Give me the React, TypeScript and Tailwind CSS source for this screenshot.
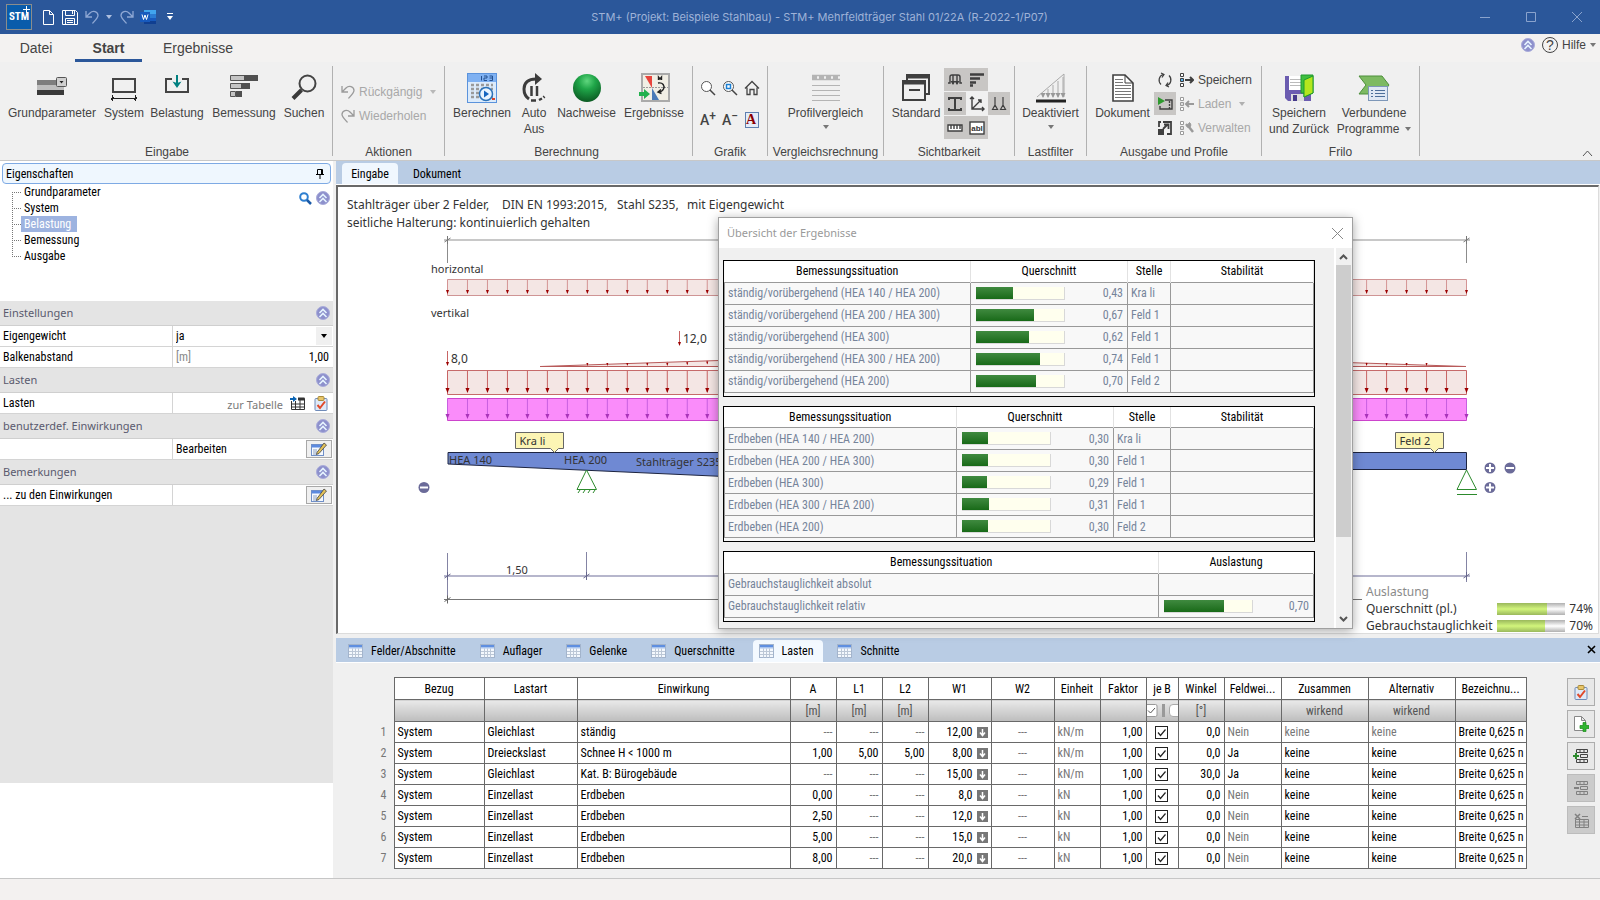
import type { ReactNode } from "react";
import clsx from "clsx";

const seg = "font-['Noto_Sans','Open_Sans',sans-serif]";
const narrow = "font-['Roboto_Condensed','Roboto',sans-serif]";

/* ---------- icons ---------- */

function Caret({ className = "fill-[#777]" }: { className?: string }) {
  return (
    <svg width="6" height="4" viewBox="0 0 6 4" className={className}>
      <path d="M0 0h6L3 4z" />
    </svg>
  );
}

function Undo({ flip = false, light = false }: { flip?: boolean; light?: boolean }) {
  return (
    <svg width="14" height="14" viewBox="0 0 14 14" fill="none" stroke={light ? "#8fa8d4" : "#9a9a9a"} strokeWidth="1.3">
      <g transform={flip ? "matrix(-1 0 0 1 14 0)" : undefined}>
        <path d="M1 1v6h6M1 7L5 3c3-3 8-1.500 8 2.500 0 2-1.500 3.500-5.500 8" />
      </g>
    </svg>
  );
}

function Chevrons() {
  return (
    <svg width="14" height="14" viewBox="0 0 14 14">
      <circle cx="7" cy="7" r="6.500" fill="#8d90cc" stroke="#a9acda" />
      <path d="M3.500 7L7 3.500 10.500 7M3.500 11L7 7.500l3.500 3.500" fill="none" stroke="#e6f4ff" strokeWidth="1.600" />
    </svg>
  );
}

function IconParams() {
  return (
    <svg width="32" height="28" viewBox="0 0 32 28">
      <path d="M1 6h27v5H1z" fill="#7e7e7e" />
      <path d="M1 11h27v5H1z" fill="#bebebe" />
      <path d="M1 16h27v5H1z" fill="#3a3a3a" />
      <rect x="20.500" y="3.500" width="10" height="9" rx="1" fill="#d0d0d0" stroke="#555" />
      <path d="M23.500 7h4l-2 2.500z" fill="#222" />
    </svg>
  );
}

function IconSystem() {
  return (
    <svg width="28" height="28" viewBox="0 0 28 28" fill="none">
      <rect x="3" y="5" width="22" height="13" stroke="#444" strokeWidth="2" />
      <path d="M1 24.500h26M2.500 21v6M25.500 21v6M1 26l3-3M24 26l3-3" stroke="#222" />
    </svg>
  );
}

function IconLoad() {
  return (
    <svg width="28" height="28" viewBox="0 0 28 28" fill="none">
      <path d="M9 5H3v13h22V5h-6" stroke="#444" strokeWidth="2" />
      <path d="M14 1v8" stroke="#008080" strokeWidth="2" />
      <path d="M9.500 7.500L14 14l4.500-6.500L14 9z" fill="#008080" />
    </svg>
  );
}

function IconDesign() {
  return (
    <svg width="30" height="28" viewBox="0 0 30 28">
      <path d="M1.500 1.500h16v5h-16zM1.500 9.500h11v5h-11zM1.500 17.500h5v5h-5z" fill="#c4c4c4" stroke="#555" />
      <path d="M15 1h14v6H15zM12 9h9v6h-9zM7 17h6v6H7z" fill="#505050" />
    </svg>
  );
}

function IconSearch() {
  return (
    <svg width="28" height="28" viewBox="0 0 28 28" fill="none">
      <circle cx="17.500" cy="9.500" r="8" stroke="#444" strokeWidth="2" />
      <path d="M11.500 16L3 24.500" stroke="#3a3a3a" strokeWidth="4" />
    </svg>
  );
}

function IconCalc() {
  return (
    <svg width="30" height="30" viewBox="0 0 30 30">
      <rect x=".5" y=".5" width="29" height="29" fill="#dcebfb" stroke="#5b93dc" />
      <path d="M1 1h28v8H1z" fill="#7fb1f2" />
      <path d="M14.500 3v4.500M17 3h3v2h-3v2.500h3M22.500 3h3v4.500h-3M22.500 5h3" fill="none" stroke="#24508f" />
      {[12, 16, 20, 24].map((y) => (
        <path key={y} d={`M4 ${y}h3M9 ${y}h3M14 ${y}h3M19 ${y}h3M24 ${y}h2`} stroke="#9a9a9a" strokeWidth="2.500" />
      ))}
      <circle cx="19" cy="21" r="6.500" fill="#e7f3ff" stroke="#2c72b8" strokeWidth="1.500" />
      <path d="M17 17.500v7l5-3.500z" fill="#1565c0" />
      <path d="M25 25h3v2h-3z" fill="#d9442c" />
    </svg>
  );
}

function IconAuto() {
  return (
    <svg width="26" height="30" viewBox="0 0 26 30" fill="none">
      <path d="M15 6C7 6 3 10 3 16c0 5 2 8 5 10" stroke="#3c3c3c" strokeWidth="3" />
      <path d="M14 0l7 6-7 6z" fill="#3c3c3c" />
      <path d="M10.500 13v10M16 13v10" stroke="#3c3c3c" strokeWidth="2.500" />
      <path d="M10 27.500h5M18 27l3-1.500M22.500 24.500l1-1" stroke="#3c3c3c" strokeWidth="2.500" />
    </svg>
  );
}

function IconGreenBall() {
  return (
    <svg width="30" height="30" viewBox="0 0 30 30">
      <defs>
        <radialGradient id="ball" cx=".5" cy=".25" r=".75">
          <stop offset="0" stopColor="#5fd67e" />
          <stop offset=".4" stopColor="#1fa548" />
          <stop offset="1" stopColor="#0b5a22" />
        </radialGradient>
      </defs>
      <circle cx="15" cy="15" r="14" fill="url(#ball)" />
    </svg>
  );
}

function IconResults() {
  return (
    <svg width="32" height="30" viewBox="0 0 32 30">
      <rect x="4" y="1" width="27" height="27" fill="#f1eee4" stroke="#aaa" strokeWidth="2" />
      <path d="M5 14.500h25" stroke="#999" strokeDasharray="2 1" />
      <path d="M7 3h7v12z" fill="#e8443c" />
      <path d="M14 15l7 12h-7z" fill="#4a7ab8" />
      <path d="M20.500 7V4l1.500 2 1.500-2v3M20 10c5-1 7 3 5.500 6-1 2-3 3-5 3M23 16.500l-3 2.500 3.500 1.500" fill="none" stroke="#222" strokeWidth="1.400" />
      <path d="M1 19h5v-3l6 5-6 5v-3H1z" fill="#22b14c" />
    </svg>
  );
}

function IconProfiles() {
  return (
    <svg width="30" height="28" viewBox="0 0 30 28" stroke="#b4b4b4">
      <path d="M1 1.500h28M1 5.500h28" strokeWidth="1.500" />
      <path d="M1 3.500h28" strokeWidth="3" strokeDasharray="5 2" />
      <path d="M1 11.500h28M1 16.500h28M1 21.500h28M1 26.500h28" />
    </svg>
  );
}

function IconStandard() {
  return (
    <svg width="30" height="28" viewBox="0 0 30 28" fill="none" stroke="#3f3f3f" strokeWidth="2">
      <path d="M6 6V1h22v19h-4" />
      <path d="M6 3h22" strokeWidth="3" />
      <rect x="2" y="7" width="22" height="19" />
      <path d="M2 9h22" strokeWidth="3" />
      <path d="M8 16h11" />
    </svg>
  );
}

function IconLoadFilter() {
  return (
    <svg width="32" height="30" viewBox="0 0 32 30" fill="none">
      <path d="M2 24L29 1v23" stroke="#aaa" />
      {[8, 13, 18, 23, 28].map((x, i) => (
        <g key={x}>
          <path d={`M${x} ${20 - i * 4}V24`} stroke="#aaa" />
          <path d={`M${x - 2.5} 20h5L${x} 25z`} fill="#999" />
        </g>
      ))}
      <path d="M1 28h30" stroke="#222" strokeWidth="3" />
    </svg>
  );
}

function IconDocument() {
  return (
    <svg width="22" height="28" viewBox="0 0 22 28" fill="none">
      <path d="M1 1h12l8 8v18H1z" fill="#fff" stroke="#3f3f3f" strokeWidth="1.600" />
      <path d="M13 1v8h8" stroke="#3f3f3f" />
      <path d="M3 5.500h8M3 8.500h8M3 11.500h16M3 14.500h16M3 17.500h16M3 20.500h16M3 23.500h16" stroke="#777" />
    </svg>
  );
}

function IconSaveBack() {
  return (
    <svg width="30" height="28" viewBox="0 0 30 28">
      <path d="M1 2h26v25H4l-3-3z" fill="#6b5cb0" />
      <path d="M5 2h14v14H5z" fill="#fff" />
      <path d="M6 5.500h12M6 8.500h12M6 11.500h12" stroke="#bbb" />
      <path d="M7 20h13v7H7z" fill="#ddd" />
      <path d="M9 21h4v6H9z" fill="#45398a" />
      <path d="M17 1h12v18l-9 4V19h-3z" fill="#3fbf3f" stroke="#1f9a2f" />
      <path d="M20 6l9-4v17l-9 4z" fill="#b4e61e" stroke="#1f9a2f" />
    </svg>
  );
}

function IconLinked() {
  return (
    <svg width="32" height="28" viewBox="0 0 32 28">
      <path d="M1 2h23l7 9-7 9H1l7-9z" fill="#7dba62" stroke="#4c8f3a" />
      <rect x="10.500" y="12.500" width="19" height="14" fill="#dfe8f4" stroke="#7d97b8" />
      <path d="M13 16.500h2M17 16.500h10M13 19.500h2M17 19.500h10M13 22.500h2M17 22.500h10" stroke="#4d6f9a" />
    </svg>
  );
}

function Lens({ inner = false }: { inner?: boolean }) {
  return (
    <svg width="16" height="16" viewBox="0 0 16 16" fill="none">
      <circle cx="6.500" cy="6.500" r="5" stroke="#555" fill="#fff" />
      <path d="M10 10l5 5" stroke="#444" strokeWidth="1.500" />
      {inner && <rect x="4.500" y="4.500" width="4" height="4" stroke="#1a7fd4" strokeWidth="1.500" />}
    </svg>
  );
}

function TableIcon() {
  return (
    <svg width="15" height="14" viewBox="0 0 15 14">
      <rect x=".5" y=".5" width="14" height="13" fill="#f4f8fd" stroke="#a3b4cc" />
      <path d="M1 1h13v2H1z" fill="#5f8fe0" />
      <path d="M1 3h13v1.500H1z" fill="#a9c4ee" />
      <path d="M1 7.500h13M1 10.500h13M4.500 4.500v9M7.500 4.500v9M10.500 4.500v9" stroke="#bcc7d6" />
    </svg>
  );
}

function Clipboard() {
  return (
    <svg width="14" height="15" viewBox="0 0 14 15">
      <rect x="1" y="2.500" width="12" height="12" rx="1" fill="#dfe9f7" stroke="#6f8bb8" />
      <rect x="4" y=".5" width="6" height="4" rx="1" fill="#e8c66a" stroke="#a98a3a" />
      <path d="M3.500 9l2.500 3 5-6.500" fill="none" stroke="#e0492a" strokeWidth="2" />
    </svg>
  );
}

function EditIcon() {
  return (
    <svg width="16" height="14" viewBox="0 0 16 14">
      <rect x=".5" y="2.500" width="12" height="11" fill="#f6f9fd" stroke="#6f8fc8" />
      <path d="M1 3h11v2.500H1z" fill="#5c8ae0" />
      <path d="M2 8h4M2 10h6M2 12h4" stroke="#8fa3c4" />
      <path d="M6 10.500L13 1l2.500 2L8 11.500l-2.500 1z" fill="#e3c25a" stroke="#444" strokeWidth=".8" />
    </svg>
  );
}

/* ---------- ribbon ---------- */

function Big({ icon, label, width, caret = false }: { icon: ReactNode; label: string[]; width: string; caret?: boolean }) {
  return (
    <button className={clsx("flex shrink-0 flex-col items-center pt-2", width)}>
      <span className="flex h-7 items-center justify-center">{icon}</span>
      <span className="mt-[3px] whitespace-nowrap leading-4">
        {label.map((line, i) => (
          <span key={line} className="flex items-center justify-center gap-1.5">
            {line}
            {caret && i > 0 && <Caret />}
          </span>
        ))}
      </span>
      {caret && label.length === 1 && <span className="mt-1"><Caret /></span>}
    </button>
  );
}

function Group({ label, width, children }: { label: string; width: string; children: ReactNode }) {
  return (
    <div className={clsx("flex h-[90px] shrink-0 flex-col justify-between border-r border-[#b1b1b1]", width)}>
      <div className="flex">{children}</div>
      <div className="h-2 whitespace-nowrap text-center leading-2">{label}</div>
    </div>
  );
}

function Cell({ on = false, title, children }: { on?: boolean; title: string; children?: ReactNode }) {
  return (
    <button aria-label={title} className={clsx("flex h-[23px] w-[22px] items-center justify-center", on && "bg-[#c8c6c4]")}>
      <svg width="16" height="16" viewBox="0 0 16 16" fill="none" stroke="#3f3f3f" strokeWidth="1.400">{children}</svg>
    </button>
  );
}

function ProfileRow({ label, off = false, caret = false, children }: { label: string; off?: boolean; caret?: boolean; children: ReactNode }) {
  return (
    <button className={clsx("flex h-6 items-center gap-1", off && "text-[#a8a8a8]")}>
      <svg width="14" height="16" viewBox="0 0 14 16" fill="none" stroke={off ? "#9a9a9a" : "#3f3f3f"}>
        <path d="M.5 1.500h3v3h-3zM.5 11.500h3v3h-3z" fill="#fff" />
        <path d="M.5 6.500h3v3h-3z" fill={off ? "#ddd" : "#59b4f0"} />
        {children}
      </svg>
      {label}
      {caret && <span className="ml-1"><Caret className="fill-[#b0b0b0]" /></span>}
    </button>
  );
}

function Ribbon() {
  return (
    <div className="flex h-[99px] items-start border-b border-[#c8c8c8] pt-1 text-xs text-[#444]">
      <Group label="Eingabe" width="w-[333px] pl-[2px]">
        <Big icon={<IconParams />} label={["Grundparameter"]} width="w-[100px]" />
        <Big icon={<IconSystem />} label={["System"]} width="w-11" />
        <Big icon={<IconLoad />} label={["Belastung"]} width="w-[62px]" />
        <Big icon={<IconDesign />} label={["Bemessung"]} width="w-[72px]" />
        <Big icon={<IconSearch />} label={["Suchen"]} width="w-12" />
      </Group>
      <Group label="Aktionen" width="w-[112px]">
        <div className="flex flex-col pl-2 pt-[14px] text-[#a8a8a8]">
          <button className="flex h-6 items-center gap-1"><Undo /> Rückgängig <span className="ml-1"><Caret className="fill-[#b8b8b8]" /></span></button>
          <button className="flex h-6 items-center gap-1"><Undo flip /> Wiederholen</button>
        </div>
      </Group>
      <Group label="Berechnung" width="w-[248px] pl-1 pr-2">
        <Big icon={<IconCalc />} label={["Berechnen"]} width="w-[66px]" />
        <Big icon={<IconAuto />} label={["Auto", "Aus"]} width="w-[38px]" />
        <Big icon={<IconGreenBall />} label={["Nachweise"]} width="w-[67px]" />
        <Big icon={<IconResults />} label={["Ergebnisse"]} width="w-[68px]" />
      </Group>
      <Group label="Grafik" width="w-[75px]">
        <div className="grid grid-cols-3 items-center justify-items-center gap-x-[6px] pl-[7px] pt-[14px] text-[15px] leading-4">
          <button aria-label="Zoom"><Lens /></button>
          <button aria-label="Zoom Fenster"><Lens inner /></button>
          <button aria-label="Gesamtansicht">
            <svg width="16" height="16" viewBox="0 0 16 16" fill="none" stroke="#444" strokeWidth="1.300">
              <path d="M1 8.500L8 1.500l7 7M3 7.500v7h3v-5h4v5h3v-7" />
            </svg>
          </button>
          <button className="mt-4 flex font-['Roboto',sans-serif] text-sm font-medium leading-4">A<span className="text-xs leading-2">+</span></button>
          <button className="mt-4 flex font-['Roboto',sans-serif] text-sm font-medium leading-4">A<span className="text-xs leading-2">−</span></button>
          <button aria-label="Schrift" className="mt-4">
            <span className="flex h-4 w-[14px] items-center border border-[#5f7fb0] bg-[#e4ecf8] font-['Liberation_Serif',serif] text-sm font-bold text-[#8b0000]">A</span>
          </button>
        </div>
      </Group>
      <Group label="Vergleichsrechnung" width="w-[116px]">
        <Big icon={<IconProfiles />} label={["Profilvergleich"]} width="w-[115px]" caret />
      </Group>
      <Group label="Sichtbarkeit" width="w-[131px]">
        <Big icon={<IconStandard />} label={["Standard"]} width="w-[60px] pl-1" />
        <div className="flex flex-col gap-px pt-[2px]">
          <div className="flex">
            <Cell on title="Lasten"><path d="M1 11h2V5q0-2 2-2h6q2 0 2 2v6h2M6 3v9M10 3v9" /><path d="M3.500 9h5L6 13zM7.500 9h5L10 13z" fill="#3f3f3f" stroke="none" /></Cell>
            <Cell on title="Balken"><path d="M1 2.500h14M1 6.500h10M1 10.500h6M1 13.500h3" strokeWidth="2.600" /></Cell>
          </div>
          <div className="flex">
            <Cell on title="Profil"><path d="M1 2h14M1 14h14M8 2v12M2 2v2M14 2v2M2 14v-2M14 14v-2" strokeWidth="2" /></Cell>
            <Cell title="Achsen"><path d="M3 1v12h12M1 3l2-2 2 2M13 11l2 2-2 2M3 13L12 4M9 4h3v3" /></Cell>
            <Cell on title="Lager"><path d="M4 1v8M12 1v8M1.500 13.500L4 9l2.500 4.500zM9.500 13.500L12 9l2.500 4.500z" strokeWidth="1.200" /></Cell>
          </div>
          <div className="flex">
            <Cell on title="Maße"><path d="M1 5h14v6H1z" fill="#fff" /><path d="M4 5v4M7 5v4M10 5v4M13 5v4" /></Cell>
            <Cell on title="Texte">
              <rect x="1" y="2" width="14" height="12" fill="#fff" />
              <text x="8" y="11" textAnchor="middle" stroke="none" fill="#333" className="text-[8px] font-bold">abl</text>
            </Cell>
          </div>
        </div>
      </Group>
      <Group label="Lastfilter" width="w-[72px]">
        <Big icon={<IconLoadFilter />} label={["Deaktiviert"]} width="w-[71px]" caret />
      </Group>
      <Group label="Ausgabe und Profile" width="w-[175px]">
        <Big icon={<IconDocument />} label={["Dokument"]} width="w-[67px] pl-1" />
        <div className="flex flex-col gap-px pt-[2px]">
          <Cell title="Aktualisieren"><path d="M6 2.500a6 6 0 0 0-2 10M10 13.500a6 6 0 0 0 2-10M4 1l3 1.500-2 3M12 15l-3-1.500 2-3" strokeWidth="1.200" /></Cell>
          <Cell on title="Vorschau"><path d="M1 1v8l7-4z" fill="#2e9a2e" stroke="none" /><path d="M8 4h7v9H3v-3" /><path d="M12.500 5v8" strokeDasharray="2 1" /></Cell>
          <Cell title="Vollbild"><path d="M6 2h8v12h-4M2 7V2h2M6 9l5-5M7 4.500h4.500V9" strokeWidth="1.800" /><path d="M1 9h6v6H1z" fill="#3f3f3f" stroke="none" /></Cell>
        </div>
        <div className="flex flex-col pl-1 pt-[2px]">
          <ProfileRow label="Speichern"><path d="M5 8h8M10 5l3 3-3 3" strokeWidth="2" /></ProfileRow>
          <ProfileRow label="Laden" off caret><path d="M14 8H6M9 5L6 8l3 3" strokeWidth="2" /></ProfileRow>
          <ProfileRow label="Verwalten" off><path d="M9 7l4 5" strokeWidth="2.500" /><path d="M9.500 2.500L8 4.500 6 4a3 3 0 0 0 3.500 3.500A3 3 0 0 0 9.500 2.500z" fill="#9a9a9a" /></ProfileRow>
        </div>
      </Group>
      <Group label="Frilo" width="w-[158px]">
        <Big icon={<IconSaveBack />} label={["Speichern", "und Zurück"]} width="w-[74px]" />
        <Big icon={<IconLinked />} label={["Verbundene", "Programme"]} width="w-[76px]" caret />
      </Group>
      <button aria-label="Menüband reduzieren" className="ml-auto mr-[7px] self-end pb-[3px]">
        <svg width="11" height="7" viewBox="0 0 11 7" fill="none" stroke="#555"><path d="M1 6l4.500-5L10 6" /></svg>
      </button>
    </div>
  );
}

function TitleBar() {
  return (
    <header className="flex h-[34px] items-center bg-[#2b579a] pl-[6px]">
      <span className="relative flex h-[26px] w-[26px] items-center justify-center border border-[#8b8d8c] bg-[#0a5cab] font-['Roboto_Condensed',sans-serif] text-[11px] font-bold text-white">
        STM
        <svg width="7" height="7" viewBox="0 0 7 7" stroke="#fff" className="absolute right-px top-px"><path d="M3.500 0v7M0 3.500h7" /></svg>
      </span>
      <button aria-label="Neu" className="ml-[11px]">
        <svg width="11" height="15" viewBox="0 0 11 15" fill="none" stroke="#fff"><path d="M.5.5h6l4 4v10H.5zM6.500.5v4h4" /></svg>
      </button>
      <button aria-label="Speichern" className="ml-2">
        <svg width="16" height="15" viewBox="0 0 16 15" fill="none" stroke="#fff">
          <path d="M.5.5h13l2 2v12H.5zM3.500.5v5h9v-5M3.500 14.500v-6h9v6M5 10.500h6M5 12.500h6M10.500 1v3" />
        </svg>
      </button>
      <button aria-label="Rückgängig" className="ml-[7px]"><Undo light /></button>
      <span className="ml-[7px]"><Caret className="fill-[#aebfdf]" /></span>
      <button aria-label="Wiederholen" className="ml-2"><Undo flip light /></button>
      <button aria-label="Word" className="ml-[6px]">
        <svg width="16" height="16" viewBox="0 0 16 16">
          <path d="M4 1h12v4H4z" fill="#41a5ee" /><path d="M4 5h12v4H4z" fill="#2b7cd3" /><path d="M4 9h12v3H4z" fill="#185abd" /><path d="M4 12h12v3H4z" fill="#103f91" />
          <rect y="3" width="10" height="10" fill="#185abd" />
          <path d="M2 5.500l1.500 5L5 6l1.500 4.500L8 5.500" fill="none" stroke="#fff" />
        </svg>
      </button>
      <svg width="6" height="8" viewBox="0 0 6 8" fill="#fff" className="ml-[11px]"><path d="M0 0h6v1H0zM0 3h6L3 7z" /></svg>
      <h1 className="flex-1 pr-3.5 text-center font-['Inter',sans-serif] text-[11px] text-[#9fb3d8]">
        STM+ (Projekt: Beispiele Stahlbau) - STM+ Mehrfeldträger Stahl 01/22A (R-2022-1/P07)
      </h1>
      <div className="flex items-center gap-9 pr-[18px]">
        {["M0 5.500h10", "M.5.5h9v9h-9z", "M0 0l10 10M10 0L0 10"].map((d, i) => (
          <button key={d} aria-label={["Minimieren", "Maximieren", "Schließen"][i]}>
            <svg width="10" height="10" viewBox="0 0 10 10" fill="none" stroke="#8aa3cd"><path d={d} /></svg>
          </button>
        ))}
      </div>
    </header>
  );
}

function RibbonTabs() {
  return (
    <nav className="flex h-7 items-center bg-[#f3f2f1] text-sm text-[#444]">
      <button className="h-7 w-[72px]">Datei</button>
      <button className="ml-[3px] h-7 w-[67px] border-b-3 border-[#2b579a] pt-[3px] font-bold">Start</button>
      <button className="ml-[11px] h-7 w-[90px]">Ergebnisse</button>
      <div className="ml-auto flex items-center gap-1 pb-1.5 pr-1 text-xs">
        <Chevrons />
        <button className="ml-[3px] flex items-center gap-1">
          <span className="flex h-4 w-4 items-center justify-center rounded-full border border-[#444] text-sm leading-4">?</span>
          Hilfe
          <Caret />
        </button>
      </div>
    </nav>
  );
}

/* ---------- left panel ---------- */

const treeItems = ["Grundparameter", "System", "Belastung", "Bemessung", "Ausgabe"];

function SectionHead({ label }: { label: string }) {
  return (
    <div className={clsx("flex h-[25px] items-center justify-between border-b border-[#cfcfcf] bg-[#e4e4e4] pl-[3px] pr-[3px] text-[11px] text-[#5a5a6e]", seg)}>
      {label}
      <button aria-label={label}><Chevrons /></button>
    </div>
  );
}

function PropRow({ label, children }: { label: string; children?: ReactNode }) {
  return (
    <div className="flex h-[21px] border-b border-[#d4d4d4] bg-white">
      <div className="flex w-[173px] shrink-0 items-center border-r border-[#d4d4d4] pl-[3px]">{label}</div>
      <div className="flex flex-1 items-center pl-[3px]">{children}</div>
    </div>
  );
}

function EditButton() {
  return (
    <button aria-label="Bearbeiten" className="ml-auto mr-px flex h-[18px] w-[26px] items-center justify-center border border-[#a8a8a8] bg-[#f0f0f0]">
      <EditIcon />
    </button>
  );
}

function LeftPanel() {
  return (
    <aside className={clsx("flex w-[333px] shrink-0 flex-col bg-white text-xs text-black", narrow)}>
      <div className="mx-[2px] mt-[2px] flex h-[21px] shrink-0 items-center justify-between rounded-sm border border-[#7eaae4] bg-[#eff7fe] pl-[3px] pr-[6px]">
        Eigenschaften
        <svg width="8" height="10" viewBox="0 0 8 10" fill="none" stroke="#000"><path d="M1.500 5.500v-5h5v5M0 5.500h8M4 6v4M5.500 0v5" /></svg>
      </div>
      <div className="flex h-[117px] shrink-0 justify-between">
        <ul className="ml-3">
          {treeItems.map((item, i) => (
            <li key={item} className="flex h-4 items-center">
              <svg width="9" height="16" viewBox="0 0 9 16" stroke="#777" strokeDasharray="1 1">
                <path d={i === 0 ? "M.5 8v8M0 8.500h9" : i === 4 ? "M.5 0v9M0 8.500h9" : "M.5 0v16M0 8.500h9"} />
              </svg>
              <a href="#" className={clsx("h-4 pl-[3px] leading-4", i === 2 && "bg-[#9db3e0] pr-1.5 text-white")}>{item}</a>
            </li>
          ))}
        </ul>
        <div className="flex h-7 items-center gap-1 pr-[3px]">
          <svg width="13" height="13" viewBox="0 0 13 13" fill="none"><circle cx="5" cy="5" r="3.800" stroke="#2f7fd0" strokeWidth="2" /><path d="M8 8l4 4" stroke="#1a5aa8" strokeWidth="2.500" /></svg>
          <button aria-label="Einklappen"><Chevrons /></button>
        </div>
      </div>
      <SectionHead label="Einstellungen" />
      <PropRow label="Eigengewicht">
        <select aria-label="Eigengewicht" className="h-[19px] flex-1 appearance-none outline-none"><option>ja</option></select>
        <span className="mr-px flex h-[18px] w-4 items-center justify-center bg-[#f0f0f0]"><Caret className="fill-black" /></span>
      </PropRow>
      <PropRow label="Balkenabstand">
        <span className="text-[#8a8a8a]">[m]</span>
        <input aria-label="Balkenabstand" defaultValue="1,00" className="w-0 flex-1 pr-1 text-right outline-none" />
      </PropRow>
      <SectionHead label="Lasten" />
      <PropRow label="Lasten">
        <a href="#" className={clsx("ml-auto pt-1 text-[11px] text-[#7a7a7a]", seg)}>zur Tabelle</a>
        <svg width="15" height="14" viewBox="0 0 15 14" className="ml-[7px]" fill="none">
          <path d="M1.500 5v8.500h13v-11H8M1.500 8h13M1.500 11h13M5.500 5v8.500M10 3v10.500" stroke="#333" />
          <path d="M8 1.500h6.500v3H8z" fill="#333" /><path d="M0 2h3V0l4 3-4 3V4H0z" fill="#0a64b4" />
        </svg>
        <button aria-label="Lasten prüfen" className="ml-[9px] mr-[5px]"><Clipboard /></button>
      </PropRow>
      <SectionHead label="benutzerdef. Einwirkungen" />
      <PropRow label="">Bearbeiten<EditButton /></PropRow>
      <SectionHead label="Bemerkungen" />
      <PropRow label="... zu den Einwirkungen"><EditButton /></PropRow>
      <div className="flex-1 bg-[#e4e4e4]" />
      <div className="h-[95px] shrink-0" />
    </aside>
  );
}

/* ---------- drawing ---------- */

const X0 = 447.5;
const X1 = 1466.5;
const stations = Array.from({ length: 52 }, (_, i) => X0 + (i * (X1 - X0)) / 51);

function Arrow({ x, y1, y2, line = "#c86464", head = "#9c0000", size = 2 }: { x: number; y1: number; y2: number; line?: string; head?: string; size?: number }) {
  return (
    <g>
      <path d={`M${x} ${y1}V${y2}`} stroke={line} />
      <path d={`M${x - size} ${y2 - size * 2}h${size * 2}L${x} ${y2 + 1}z`} fill={head} />
    </g>
  );
}

function Tick({ x, y, color }: { x: number; y: number; color: string }) {
  return <path d={`M${x - 3} ${y + 2}l6-4M${x} ${y - 4}v8`} stroke={color} fill="none" />;
}

function Tag({ x, label }: { x: number; label: string }) {
  return (
    <g>
      <path d={`M${x} 432.500h48v16h-5l-4 4-4-4h-35z`} fill="#fcf5b4" stroke="#666" />
      <text x={x + 4} y="445">{label}</text>
    </g>
  );
}

function Node({ x, y, plus = false }: { x: number; y: number; plus?: boolean }) {
  return (
    <g>
      <circle cx={x} cy={y} r="5.500" fill="#6b6b99" />
      <path d={`M${x - 4} ${y}h8${plus ? `M${x} ${y - 4}v8` : ""}`} stroke="#fff" strokeWidth="2" />
    </g>
  );
}

function Drawing() {
  return (
    <svg className={clsx("h-full w-full text-[11px]", seg)} fill="#333">
      <g transform="translate(-338 -187)">
        <g className="text-xs">
          <text x="347" y="209">
            <tspan>Stahlträger über 2 Felder,</tspan>
            <tspan x="502">DIN EN 1993:2015,</tspan>
            <tspan x="617">Stahl S235,</tspan>
            <tspan x="687">mit Eigengewicht</tspan>
          </text>
          <text x="347" y="227">seitliche Halterung: kontinuierlich gehalten</text>
        </g>
        <path d="M444 240H1470" stroke="#c8c8c8" strokeWidth="2" />
        <path d="M447.500 236v27M1466.500 236v27" stroke="#8c8c8c" />
        <Tick x={447.5} y={240} color="#777" />
        <Tick x={1466.5} y={240} color="#777" />

        <text x="431" y="273">horizontal</text>
        <path d={`M${X0} 279.500H${X1}v16H${X0}z`} fill="#f4e6e4" stroke="#cf9494" />
        {stations.map((x) => <Arrow key={x} x={x} y1={280} y2={293} line="#d49494" size={1.5} />)}

        <text x="431" y="317">vertikal</text>
        <Arrow x={679.5} y1={331} y2={345} size={1.5} />
        <text x="683" y="343" className="text-xs">12,0</text>
        <Arrow x={447.5} y1={351} y2={365} size={1.5} />
        <text x="451" y="363" className="text-xs">8,0</text>
        <path d="M540 366.500L1003 351l463 15.500z" fill="#f4e6e4" stroke="#b85a5a" />
        {stations.slice(7, 50).map((x) => {
          const top = 366 - (15 * (x < 1003 ? x - 540 : 1467 - x)) / 463;
          return <Arrow key={x} x={x} y1={top} y2={Math.min(top + 3, 365)} size={1} />;
        })}

        <path d={`M${X0} 370.500H${X1}v24H${X0}z`} fill="#f4e6e4" stroke="#c66a6a" />
        {stations.map((x) => <Arrow key={x} x={x} y1={371} y2={392} />)}
        <path d={`M${X0} 398.500H${X1}v22H${X0}z`} fill="#fa8cfa" stroke="#cc44cc" />
        {stations.map((x) => <Arrow key={x} x={x} y1={399} y2={418} line="#c860e0" head="#a834b8" />)}

        <path d="M448 452.500H1466.500v17H1250L1000 489 448 464z" fill="#6f89d3" stroke="#1d2440" />
        <Tag x={515.5} label="Kra li" />
        <Tag x={1395.5} label="Feld 2" />
        <text x="449" y="464">HEA 140</text>
        <text x="564" y="464">HEA 200</text>
        <text x="636" y="466">Stahlträger S235</text>

        <g fill="none" stroke="#2c8a2c">
          <path d="M586.500 470l-9.500 19.500h19.500zM578 493l2-3M583 493l2-3M588 493l2-3M593 493l2-3" />
          <path d="M1466.500 470l-9.500 19.500h19.500zM1457 494.500h20" />
        </g>
        <Node x={424} y={487.5} />
        <Node x={1490} y={468} plus />
        <Node x={1510} y={468} />
        <Node x={1490} y={487.5} plus />

        <path d="M444 576H1470" stroke="#b6b6cc" strokeWidth="2" />
        <path d="M447.500 553v49M586.500 552v28M1466.500 552v30" stroke="#8484a4" />
        <path d="M444 599.500H1362" stroke="#777" />
        {[447.5, 586.5, 1466.5].map((x) => <Tick key={x} x={x} y={576} color="#66668c" />)}
        <Tick x={447.5} y={599.5} color="#666" />
        <text x="506" y="574">1,50</text>
      </g>
    </svg>
  );
}

function Utilisation() {
  const rows: [string, number][] = [["Querschnitt (pl.)", 74], ["Gebrauchstauglichkeit", 70]];
  return (
    <div className={clsx("absolute -bottom-px right-[5px] w-[227px] text-xs leading-[17px] text-[#333]", seg)}>
      <div className="text-[#8a8a8a]">Auslastung</div>
      {rows.map(([label, pct]) => (
        <div key={label} className="flex items-center">
          <span className="flex-1">{label}</span>
          <span className="flex h-3 w-[68px] bg-linear-to-b from-[#b0b0b0] via-white to-[#b0b0b0]">
            <span className="bg-linear-to-b from-[#9ab85c] via-[#d2f57c] to-[#9ab85c]" style={{ width: `${pct}%` }} />
          </span>
          <span className="w-7 text-right">{pct}%</span>
        </div>
      ))}
    </div>
  );
}

/* ---------- results dialog ---------- */

type Result = [string, number | null, string?];

const permanent: Result[] = [
  ["ständig/vorübergehend (HEA 140 / HEA 200)", 0.43, "Kra li"],
  ["ständig/vorübergehend (HEA 200 / HEA 300)", 0.67, "Feld 1"],
  ["ständig/vorübergehend (HEA 300)", 0.62, "Feld 1"],
  ["ständig/vorübergehend (HEA 300 / HEA 200)", 0.74, "Feld 1"],
  ["ständig/vorübergehend (HEA 200)", 0.7, "Feld 2"],
];
const seismic: Result[] = [
  ["Erdbeben (HEA 140 / HEA 200)", 0.3, "Kra li"],
  ["Erdbeben (HEA 200 / HEA 300)", 0.3, "Feld 1"],
  ["Erdbeben (HEA 300)", 0.29, "Feld 1"],
  ["Erdbeben (HEA 300 / HEA 200)", 0.31, "Feld 1"],
  ["Erdbeben (HEA 200)", 0.3, "Feld 2"],
];
const service: Result[] = [
  ["Gebrauchstauglichkeit absolut", null],
  ["Gebrauchstauglichkeit relativ", 0.7],
];

function ResultTable({ heads, cols, rows }: { heads: string[]; cols: string[]; rows: Result[] }) {
  return (
    <div className="mb-[9px] border border-black bg-[#f8f8f8] pb-[3px]">
      <table className="w-full table-fixed border-collapse">
        <colgroup>{cols.map((c, i) => <col key={i} className={c} />)}</colgroup>
        <thead>
          <tr className="h-[21px] border-b border-[#999] bg-white text-black">
            {heads.map((h) => <th key={h} className="border-r border-[#e2e2e2] p-0 font-normal">{h}</th>)}
          </tr>
        </thead>
        <tbody>
          {rows.map(([name, value, place]) => (
            <tr key={name} className="h-[22px] border-b border-[#999] text-[#76849a]">
              <td className="border-x border-[#999] p-0 pl-[3px]">{name}</td>
              <td className="border-r border-[#999] p-0 pl-[5px] pr-1">
                {value !== null && (
                  <div className="flex items-center justify-between">
                    <span className="flex h-[13px] w-[89px] border-b border-r border-[#d8d8d8] bg-[#ffffee]">
                      <span className="bg-linear-to-b from-[#3f8a3f] to-[#176a17]" style={{ width: `${value * 98}%` }} />
                    </span>
                    {value.toFixed(2).replace(".", ",")}
                  </div>
                )}
              </td>
              {heads.length > 2 && <td className="border-r border-[#999] p-0 pl-[3px]">{place}</td>}
              {heads.length > 2 && <td className="border-r border-[#999] p-0" />}
            </tr>
          ))}
        </tbody>
      </table>
    </div>
  );
}

function ResultsDialog() {
  const heads = ["Bemessungssituation", "Querschnitt", "Stelle", "Stabilität"];
  return (
    <div role="dialog" aria-label="Übersicht der Ergebnisse" className="absolute left-[380px] top-[30px] flex h-[412px] w-[635px] flex-col border border-[#a0a0a0] bg-[#f0f0f0] shadow-[0_2px_10px_rgba(0,0,0,0.35)]">
      <div className={clsx("flex h-[30px] shrink-0 items-center justify-between bg-white pl-2 pr-[9px] text-[11px] text-[#999]", seg)}>
        Übersicht der Ergebnisse
        <button aria-label="Schließen">
          <svg width="11" height="11" viewBox="0 0 11 11" stroke="#888"><path d="M0 0l11 11M11 0L0 11" /></svg>
        </button>
      </div>
      <div className="flex min-h-0 flex-1">
        <div className={clsx("min-w-0 flex-1 overflow-hidden pl-1 pt-3 text-xs", narrow)}>
          <ResultTable heads={heads} cols={["w-[246px]", "w-[157px]", "w-[43px]", ""]} rows={permanent} />
          <ResultTable heads={heads} cols={["w-[232px]", "w-[157px]", "w-[57px]", ""]} rows={seismic} />
          <ResultTable heads={["Bemessungssituation", "Auslastung"]} cols={["w-[434px]", ""]} rows={service} />
        </div>
        <div className="ml-[19px] mr-px flex w-[17px] flex-col items-center border-l-2 border-white">
          <svg width="9" height="17" viewBox="0 0 9 17" fill="none" stroke="#555" strokeWidth="2"><path d="M1 11l3.500-3.500L8 11" /></svg>
          <div className="h-[272px] w-full bg-[#cdcdcd]" />
          <svg width="9" height="17" viewBox="0 0 9 17" fill="none" stroke="#555" strokeWidth="2" className="mt-auto"><path d="M1 6l3.500 3.500L8 6" /></svg>
        </div>
      </div>
    </div>
  );
}

/* ---------- load table ---------- */

const columns: { head: string; unit?: string; width: string }[] = [
  { head: "Bezug", width: "w-[90px]" },
  { head: "Lastart", width: "w-[93px]" },
  { head: "Einwirkung", width: "w-[213px]" },
  { head: "A", unit: "[m]", width: "w-[46px]" },
  { head: "L1", unit: "[m]", width: "w-[46px]" },
  { head: "L2", unit: "[m]", width: "w-[46px]" },
  { head: "W1", width: "w-[63px]" },
  { head: "W2", width: "w-[63px]" },
  { head: "Einheit", width: "w-[46px]" },
  { head: "Faktor", width: "w-[46px]" },
  { head: "je B", unit: "check", width: "w-8" },
  { head: "Winkel", unit: "[°]", width: "w-[46px]" },
  { head: "Feldwei...", width: "w-[57px]" },
  { head: "Zusammen", unit: "wirkend", width: "w-[87px]" },
  { head: "Alternativ", unit: "wirkend", width: "w-[87px]" },
  { head: "Bezeichnu...", width: "w-[71px]" },
];

const loads = [
  { art: "Gleichlast", ew: "ständig", a: "---", l1: "---", l2: "---", w: "12,00", unit: "kN/m", angle: "0,0", field: "Nein" },
  { art: "Dreieckslast", ew: "Schnee H < 1000 m", a: "1,00", l1: "5,00", l2: "5,00", w: "8,00", unit: "kN/m", angle: "0,0", field: "Ja" },
  { art: "Gleichlast", ew: "Kat. B: Bürogebäude", a: "---", l1: "---", l2: "---", w: "15,00", unit: "kN/m", angle: "30,0", field: "Ja" },
  { art: "Einzellast", ew: "Erdbeben", a: "0,00", l1: "---", l2: "---", w: "8,0", unit: "kN", angle: "0,0", field: "Nein" },
  { art: "Einzellast", ew: "Erdbeben", a: "2,50", l1: "---", l2: "---", w: "12,0", unit: "kN", angle: "0,0", field: "Nein" },
  { art: "Einzellast", ew: "Erdbeben", a: "5,00", l1: "---", l2: "---", w: "15,0", unit: "kN", angle: "0,0", field: "Nein" },
  { art: "Einzellast", ew: "Erdbeben", a: "8,00", l1: "---", l2: "---", w: "20,0", unit: "kN", angle: "0,0", field: "Nein" },
];

function Td({ right = false, center = false, dim = false, children }: { right?: boolean; center?: boolean; dim?: boolean; children: ReactNode }) {
  return (
    <td className={clsx("overflow-hidden border border-[#696969] bg-white p-0 px-[3px]", right && "text-right", center && "text-center", dim && "text-[#777]")}>
      {children}
    </td>
  );
}

function NumTd({ value }: { value: string }) {
  return <Td right dim={value === "---"}>{value}</Td>;
}

function LoadTable() {
  return (
    <table className="ml-7 w-[1162px] shrink-0 table-fixed border-collapse whitespace-nowrap">
      <colgroup>
        <col className="w-[30px]" />
        {columns.map((c) => <col key={c.head} className={c.width} />)}
      </colgroup>
      <thead>
        <tr className="h-[22px]">
          <td />
          {columns.map((c) => <th key={c.head} className="border border-[#696969] bg-white p-0 font-normal">{c.head}</th>)}
        </tr>
        <tr className="h-[22px]">
          <td />
          {columns.map((c) => (
            <td key={c.head} className="overflow-hidden border border-[#696969] bg-linear-to-b from-[#e9e9e9] to-[#bdbdbd] p-0 text-center text-[#555]">
              {c.unit === "check" ? (
                <span className="flex items-center gap-1">
                  <svg width="11" height="13" viewBox="0 0 11 13" className="shrink-0"><rect x="-2" y=".5" width="12" height="12" rx="1.500" fill="#fff" stroke="#999" /><path d="M1 6.500L3.500 9 8 4" fill="none" stroke="#555" /></svg>
                  <span className="h-[13px] w-[3px] shrink-0 bg-[#999]" />
                  <span className="h-[13px] w-4 shrink-0 rounded-sm border border-[#aaa] bg-white" />
                </span>
              ) : c.unit}
            </td>
          ))}
        </tr>
      </thead>
      <tbody>
        {loads.map((r, i) => (
          <tr key={i} className="h-[21px]">
            <td className="p-0 pr-[7px] text-right text-[#777]">{i + 1}</td>
            <Td>System</Td>
            <Td>{r.art}</Td>
            <Td>{r.ew}</Td>
            <NumTd value={r.a} />
            <NumTd value={r.l1} />
            <NumTd value={r.l2} />
            <Td>
              <span className="flex items-center justify-end gap-1">
                {r.w}
                <svg width="11" height="11" viewBox="0 0 11 11"><path d="M0 0h11v11H0z" fill="#777" /><path d="M5.500 2v6M3 5.500l2.500 3L8 5.500" fill="none" stroke="#fff" strokeWidth="1.500" /></svg>
              </span>
            </Td>
            <Td center dim>---</Td>
            <Td dim>{r.unit}</Td>
            <Td right>1,00</Td>
            <Td>
              <label className="relative ml-[5px] block h-[13px] w-[13px]">
                <input type="checkbox" defaultChecked aria-label={`je B ${i + 1}`} className="block h-[13px] w-[13px] appearance-none border border-[#222] bg-white" />
                <svg viewBox="0 0 13 13" className="pointer-events-none absolute inset-0" fill="none" stroke="#222" strokeWidth="1.200"><path d="M3 6.500L5.500 9.500 10.500 3.500" /></svg>
              </label>
            </Td>
            <Td right>{r.angle}</Td>
            <Td dim={r.field === "Nein"}>{r.field}</Td>
            <Td dim={i === 0}>keine</Td>
            <Td dim={i === 0}>keine</Td>
            <Td>Breite 0,625 n</Td>
          </tr>
        ))}
      </tbody>
    </table>
  );
}

function SideButton({ title, off = false, children }: { title: string; off?: boolean; children: ReactNode }) {
  return (
    <button aria-label={title} className={clsx("flex h-7 w-7 items-center justify-center border", off ? "border-[#bcbcbc] bg-[#cbcbcb]" : "border-[#adadad] bg-[#e8e8e8]")}>
      {children}
    </button>
  );
}

function RowsIcon({ sign, color }: { sign: "plus" | "minus"; color: string }) {
  return (
    <svg width="16" height="16" viewBox="0 0 16 16" fill="none" stroke={color}>
      <path d="M3.500 1.500h11v3h-11zM3.500 11.500h11v3h-11zM7 1.500v3M11 1.500v3M7 11.500v3M11 11.500v3M7.500 6.500h7v3h-7z" />
      {sign === "plus" ? <path d="M0 8h6M3 5v6" stroke="#2c8a2c" strokeWidth="2" /> : <path d="M1 8h5" strokeWidth="2" />}
    </svg>
  );
}

function BottomPanel() {
  const tabs = ["Felder/Abschnitte", "Auflager", "Gelenke", "Querschnitte", "Lasten", "Schnitte"];
  return (
    <section className={clsx("mt-1 flex h-[240px] shrink-0 flex-col bg-[#f0f0f0] text-xs text-black", narrow)}>
      <div className="flex h-[25px] shrink-0 items-end border-b border-white bg-[#b9cce4] pl-[6px]">
        {tabs.map((t) => (
          <button key={t} className={clsx("mr-2 flex h-[22px] items-center gap-2 rounded-t px-2 pl-[6px] pr-[10px]", t === "Lasten" && "bg-[#f3f9ff]")}>
            <TableIcon />
            {t}
          </button>
        ))}
        <button aria-label="Schließen" className="mb-2 ml-auto mr-1">
          <svg width="9" height="9" viewBox="0 0 9 9" stroke="#000" strokeWidth="1.600"><path d="M1 1l7 7M8 1L1 8" /></svg>
        </button>
      </div>
      <div className="flex justify-between pt-[14px]">
        <LoadTable />
        <div className="flex flex-col gap-1 pr-[5px] pt-px">
          <SideButton title="Prüfen"><Clipboard /></SideButton>
          <SideButton title="Neu">
            <svg width="16" height="16" viewBox="0 0 16 16"><path d="M1.500.5h7l4 4v10h-11zM8.500.5v4h4" fill="#fff" stroke="#888" /><path d="M10 15.500v-3H7v-3h3v-3h3v3h3v3h-3v3z" fill="#2fb52f" stroke="#1a8a1a" strokeWidth=".7" /></svg>
          </SideButton>
          <SideButton title="Zeile einfügen"><RowsIcon sign="plus" color="#444" /></SideButton>
          <SideButton title="Zeile löschen" off><RowsIcon sign="minus" color="#808080" /></SideButton>
          <SideButton title="Tabelle leeren" off>
            <svg width="15" height="15" viewBox="0 0 15 15" fill="none" stroke="#808080"><path d="M1 1l5 5M6 1L1 6" strokeWidth="1.500" /><path d="M8 3.500h6M1.500 6.500h13v8h-13zM1.500 9h13M1.500 12h13M5.500 6.500v8M10 6.500v8" /></svg>
          </SideButton>
        </div>
      </div>
    </section>
  );
}

export default function App() {
  return (
    <div className="flex h-screen flex-col overflow-hidden bg-[#f0f0f0] font-['Liberation_Sans',sans-serif]">
      <TitleBar />
      <RibbonTabs />
      <Ribbon />
      <main className="flex min-h-0 flex-1">
        <LeftPanel />
        <div className="ml-[3px] flex min-w-0 flex-1 flex-col">
          <div className={clsx("flex h-6 shrink-0 items-end border-b border-white bg-[#b9cce4] pl-[6px] text-xs text-black", narrow)}>
            <button className="h-[21px] w-14 rounded-t bg-[#f0f7fe]">Eingabe</button>
            <button className="ml-[6px] h-[21px] w-[66px]">Dokument</button>
          </div>
          <div className="relative mr-px min-h-0 flex-1 border-b border-l-2 border-r border-t-2 border-b-[#dcdcdc] border-l-[#696969] border-r-[#dcdcdc] border-t-[#696969] bg-white">
            <Drawing />
            <Utilisation />
            <ResultsDialog />
          </div>
          <BottomPanel />
        </div>
      </main>
      <footer className="h-[22px] shrink-0 border-t border-[#c6c6c6] bg-[#f3f1f0]" />
    </div>
  );
}
